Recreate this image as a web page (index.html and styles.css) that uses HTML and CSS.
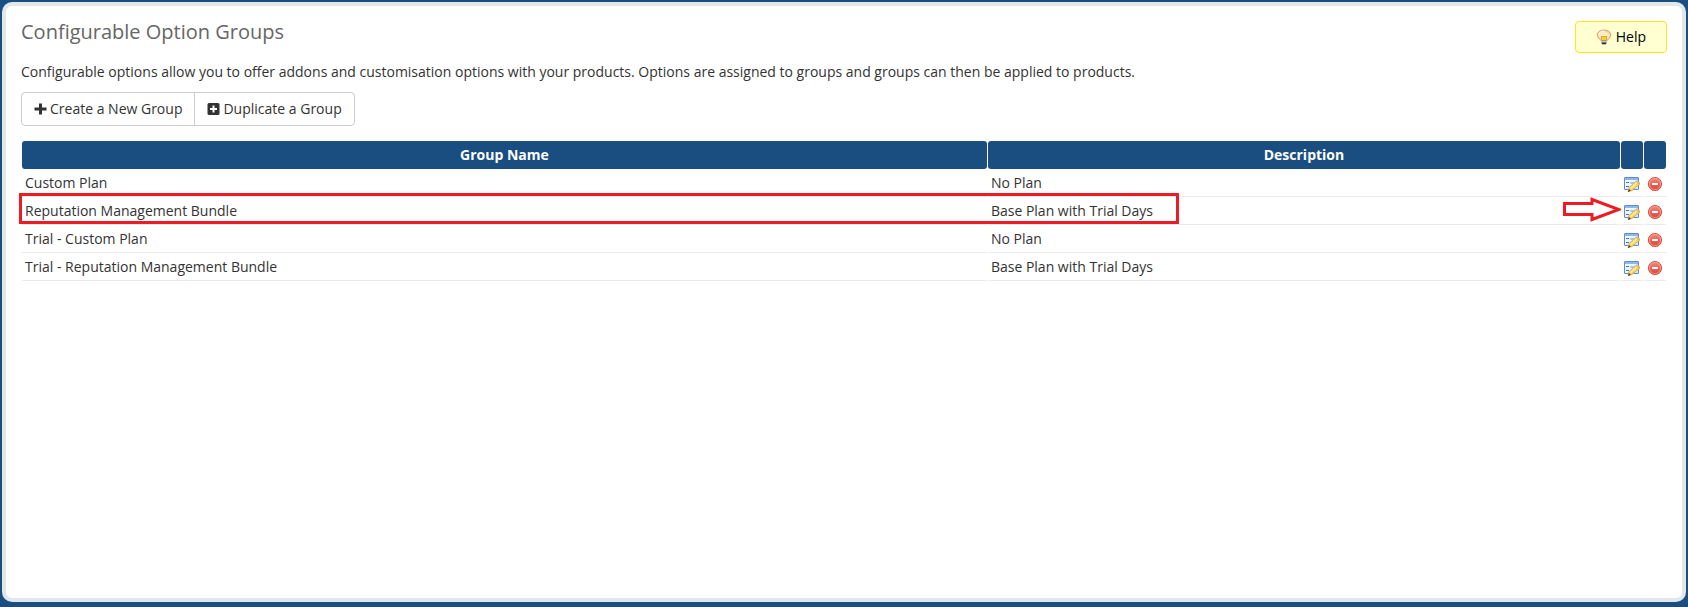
FILE: index.html
```html
<!DOCTYPE html>
<html lang="en">
<head>
<meta charset="utf-8">
<title>Configurable Option Groups</title>
<link rel="stylesheet" href="styles.css">
</head>
<body>
<svg class="sprite" aria-hidden="true">
  <defs>
    <linearGradient id="red" x1="0" y1="0" x2="0" y2="1"><stop offset="0" stop-color="#f58a7b"/><stop offset="1" stop-color="#df3e31"/></linearGradient>
    <linearGradient id="page" x1="0" y1="0" x2="1" y2="1"><stop offset="0" stop-color="#fff"/><stop offset="1" stop-color="#d6e6fa"/></linearGradient>
    <radialGradient id="glow" cx=".5" cy=".55" r=".55"><stop offset="0" stop-color="#fff6c8"/><stop offset=".6" stop-color="#fbe7c4"/><stop offset="1" stop-color="#f2c590"/></radialGradient>
  </defs>
  <symbol id="edit" viewBox="0 0 16 16">
    <rect x=".5" y="1.5" width="14" height="12" rx=".5" fill="url(#page)" stroke="#5b8bd0"/>
    <path d="M1 2h13v2H1z" fill="#8fb8f0"/>
    <path d="M2 6.5h3M2 10.500h3" stroke="#3f74c8"/>
    <path d="M6.500 6.500h4v1h-4zM6.500 10.500h2" fill="none" stroke="#a9c6ee"/>
    <path d="M12 5.500l3.500 2.800-7.500 6.200-4 1.200 1-4z" fill="#f9d65c" stroke="#c89a48" stroke-width=".7"/>
    <path d="M6.500 12.500l6.500-6" stroke="#fff0a0" stroke-width="1.300"/>
    <path d="M12 5.300l1.200-.9 2.600 2.200-.4 1.700z" fill="#ecc09a" stroke="#c89868" stroke-width=".5"/>
    <path d="M4.900 13l2 1.800L4 16z" fill="#5b3a1c"/>
  </symbol>
  <symbol id="remove" viewBox="0 0 16 16">
    <circle cx="8" cy="8" r="6.600" fill="url(#red)" stroke="#d5463c" stroke-width=".9"/>
    <circle cx="8" cy="8" r="5.600" fill="none" stroke="#f9b0a5" stroke-width=".7"/>
    <path d="M5 7h6v2H5z" fill="#fff"/>
  </symbol>
  <symbol id="bulb" viewBox="0 0 16 16">
    <path d="M8 1C4 1 1.200 3.300 1.200 6c0 2.500 2.300 3.700 3.600 5.500h6.400C12.500 9.700 14.800 8.500 14.800 6c0-2.700-2.800-5-6.800-5z" fill="url(#glow)" stroke="#dc9d58" stroke-width=".9"/>
    <path d="M3 5.200C4 2.500 7 2 8.500 2" fill="none" stroke="#fff" stroke-width="1.200"/>
    <path d="M5 7h6v4.500H5z" fill="#fbcf3c"/>
    <path d="M5.500 7v4M10.500 7v4M5 7.500h6" stroke="#ef9d2e" stroke-width=".9" fill="none"/>
    <path d="M5.500 11.500h5v3l-1 1h-3l-1-1z" fill="#77797c"/>
    <path d="M5.500 12.500h5" stroke="#c4c8cc"/>
    <path d="M6 14.500h4" stroke="#33353a"/>
  </symbol>
</svg>
<main class="panel">
  <header class="heading">
    <h1 class="title">Configurable Option Groups</h1>
    <a class="help" href="#help"><svg class="icon"><use href="#bulb"/></svg><span>Help</span></a>
  </header>
  <p class="intro">Configurable options allow you to offer addons and customisation options with your products. Options are assigned to groups and groups can then be applied to products.</p>
  <div class="actions">
    <a class="action" href="#new"><svg class="glyph" viewBox="0 0 13 14" aria-hidden="true"><path d="M5 1.500h3v4h4.500v3H8v4H5v-4H.500v-3H5z" fill="#333"/></svg><span>Create a New Group</span></a>
    <a class="action" href="#duplicate"><svg class="glyph" viewBox="0 0 13 14" aria-hidden="true"><rect x=".500" y="1" width="12" height="12" rx="1.500" fill="#333"/><path d="M6.500 3.500v7M3 7h7" stroke="#fff" stroke-width="2"/></svg><span>Duplicate a Group</span></a>
  </div>
  <div class="listing">
    <table class="groups">
      <colgroup><col class="col-name"><col><col class="col-icon"><col class="col-icon"></colgroup>
      <thead>
        <tr><th scope="col">Group Name</th><th scope="col">Description</th><th></th><th></th></tr>
      </thead>
      <tbody>
        <tr><td>Custom Plan</td><td>No Plan</td><td><a href="#edit-1" aria-label="Edit"><svg class="icon"><use href="#edit"/></svg></a></td><td><a href="#delete-1" aria-label="Delete"><svg class="icon"><use href="#remove"/></svg></a></td></tr>
        <tr><td>Reputation Management Bundle</td><td>Base Plan with Trial Days</td><td><a href="#edit-2" aria-label="Edit"><svg class="icon"><use href="#edit"/></svg></a></td><td><a href="#delete-2" aria-label="Delete"><svg class="icon"><use href="#remove"/></svg></a></td></tr>
        <tr><td>Trial - Custom Plan</td><td>No Plan</td><td><a href="#edit-3" aria-label="Edit"><svg class="icon"><use href="#edit"/></svg></a></td><td><a href="#delete-3" aria-label="Delete"><svg class="icon"><use href="#remove"/></svg></a></td></tr>
        <tr><td>Trial - Reputation Management Bundle</td><td>Base Plan with Trial Days</td><td><a href="#edit-4" aria-label="Edit"><svg class="icon"><use href="#edit"/></svg></a></td><td><a href="#delete-4" aria-label="Delete"><svg class="icon"><use href="#remove"/></svg></a></td></tr>
      </tbody>
    </table>
    <div class="mark-box"></div>
    <svg class="mark-arrow" viewBox="0 0 58 26" aria-hidden="true"><path d="M1.500 6.500H29V2.500L56 12.500 29 22.500V17.500H1.500z" fill="none" stroke="#ed1c24" stroke-width="3"/></svg>
  </div>
</main>
</body>
</html>
```
FILE: styles.css
```css
* {
  box-sizing: border-box;
}

body {
  display: flex;
  min-height: 100vh;
  margin: 0;
  padding: 2px 2px 5px;
  background: #1a4d80;
  color: #333;
  font: 14px/20px "Open Sans", sans-serif;
}

.sprite {
  position: absolute;
  width: 0;
  height: 0;
}

.panel {
  flex: 1;
  padding: 15px;
  background: #fff;
  border: 4px solid #e2e7e9;
  border-radius: 10px;
}

.heading {
  display: flex;
  justify-content: space-between;
  align-items: flex-start;
  margin-bottom: 9px;
}

.title {
  margin: 0;
  color: #666;
  font-size: 20px;
  font-weight: 400;
  line-height: 22px;
}

.help {
  display: flex;
  align-items: center;
  gap: 4px;
  padding: 5px 20px;
  background: #ffffd2;
  border: 1px solid #fde61e;
  border-radius: 4px;
  color: #000;
  text-decoration: none;
}

.icon {
  display: block;
  width: 16px;
  height: 16px;
}

.intro {
  margin: 0 0 10px;
}

.actions {
  display: flex;
  margin-bottom: 14px;
}

.action {
  display: flex;
  align-items: center;
  gap: 3px;
  padding: 6px 12px;
  border: 1px solid #ccc;
  color: #333;
  text-decoration: none;
}

.action:first-child {
  border-radius: 4px 0 0 4px;
}

.action:last-child {
  margin-left: -1px;
  border-radius: 0 4px 4px 0;
}

.glyph {
  width: 13px;
  height: 14px;
}

.listing {
  position: relative;
}

.groups {
  width: 100%;
  table-layout: fixed;
  border-collapse: separate;
  border-spacing: 1px;
}

.col-name {
  width: 58.8%;
}

.col-icon {
  width: 22px;
}

.groups th {
  height: 28px;
  padding: 4px 3px;
  background: #1a4d80;
  border-radius: 3px;
  color: #fff;
  font-weight: 700;
}

.groups td {
  height: 27px;
  padding: 3px;
  border-bottom: 1px solid #ebebeb;
}

.groups .icon {
  margin-top: 1px;
}

.mark-box {
  position: absolute;
  top: 53px;
  left: -2px;
  width: 70.5%;
  height: 31px;
  border: 3px solid #ed1c24;
  pointer-events: none;
}

.mark-arrow {
  position: absolute;
  top: 57px;
  right: 46px;
  width: 58px;
  height: 26px;
  pointer-events: none;
}
```
